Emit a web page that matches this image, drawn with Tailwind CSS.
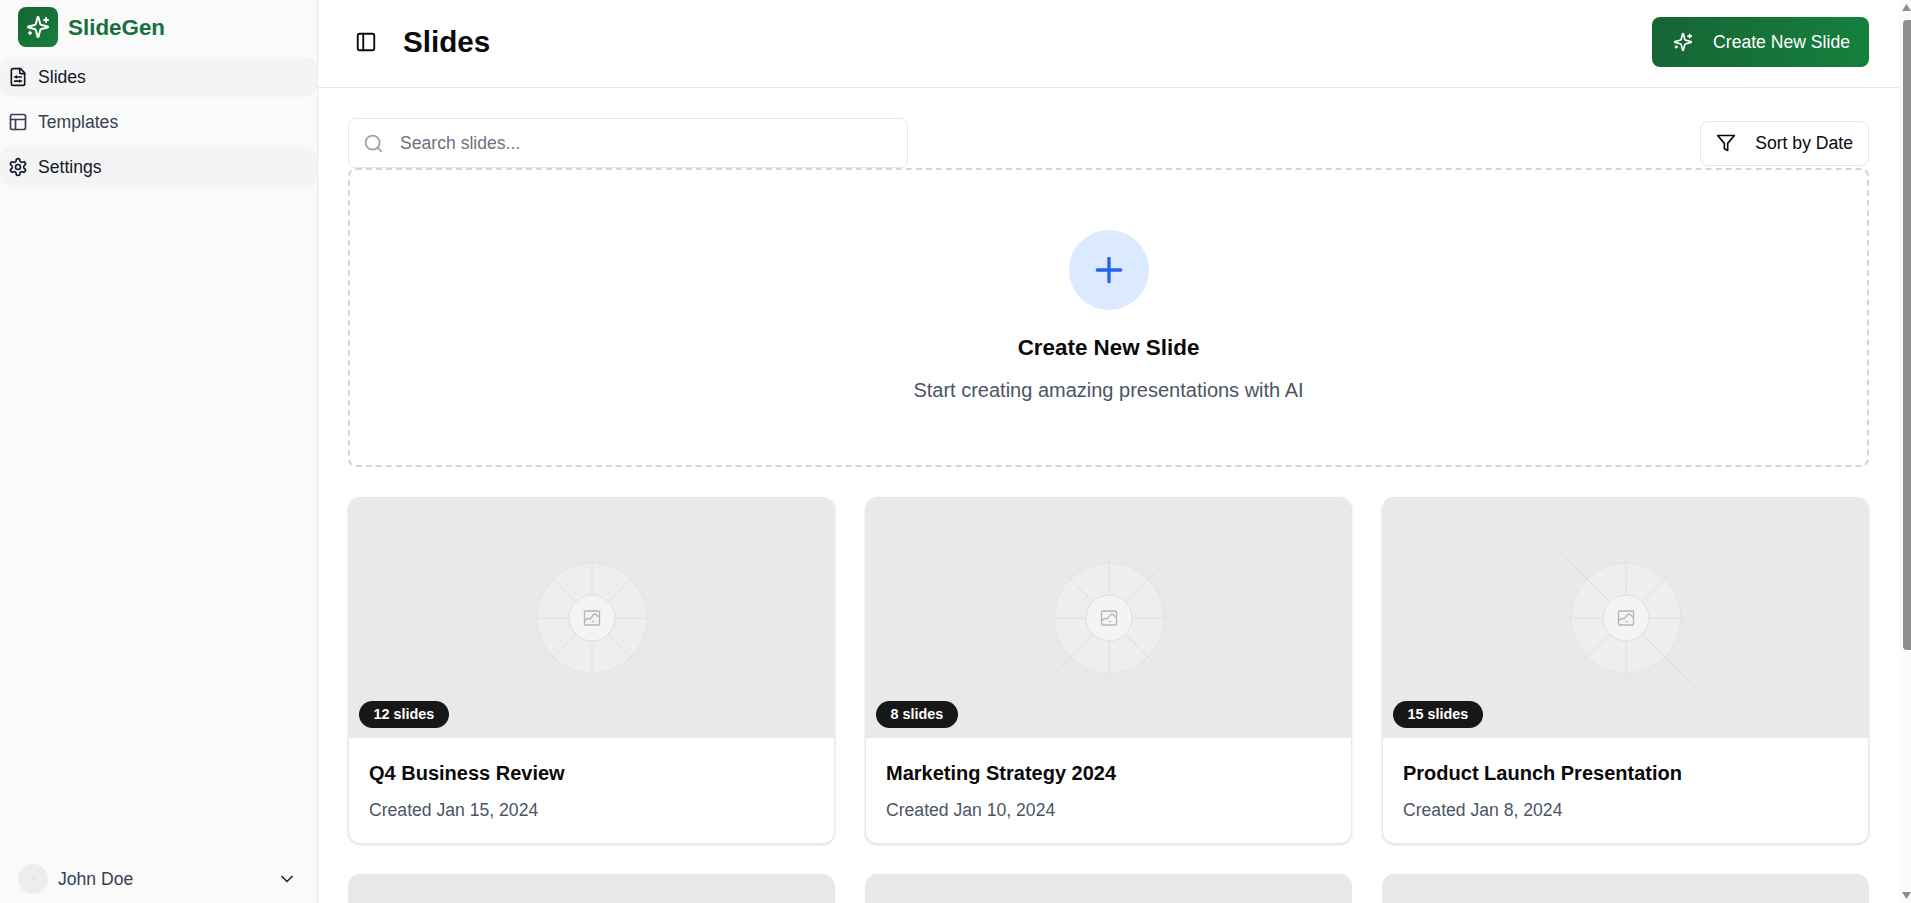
<!DOCTYPE html>
<html lang="en">
<head>
<meta charset="utf-8">
<title>SlideGen</title>
<script src="https://cdn.jsdelivr.net/npm/@tailwindcss/browser@4"></script>
</head>
<body class="h-[903px] overflow-hidden bg-white font-['Liberation_Sans',Arial,sans-serif] text-[17.6px] text-[#0a0a0a]">
<svg width="0" height="0" class="absolute">
  <defs>
    <radialGradient id="ray" gradientUnits="userSpaceOnUse" cx="80" cy="80" r="78">
      <stop offset="0.3" stop-color="#dedede"/>
      <stop offset="0.8" stop-color="#e2e2e2"/>
      <stop offset="1" stop-color="#e8e8e8"/>
    </radialGradient>
    <radialGradient id="diag" gradientUnits="userSpaceOnUse" cx="80" cy="80" r="108">
      <stop offset="0.3" stop-color="#dcdcdc"/>
      <stop offset="0.85" stop-color="#e0e0e0"/>
      <stop offset="1" stop-color="#e7e7e7"/>
    </radialGradient>
  </defs>
</svg>
<div class="flex h-[903px]">
  <aside class="flex w-[318px] shrink-0 flex-col border-r border-[#e5e7eb] bg-[#fafafa]">
    <div class="flex h-[57px] items-start gap-[10px] pl-[18px] pt-[7px]">
      <div class="flex h-10 w-10 items-center justify-center rounded-lg bg-gradient-to-br from-[#166534] to-[#15803d]">
        <svg class="h-6 w-6" viewBox="0 0 24 24" fill="none" stroke="#fff" stroke-width="2" stroke-linecap="round" stroke-linejoin="round"><path d="M9.937 15.5A2 2 0 0 0 8.5 14.063l-6.135-1.582a.5.5 0 0 1 0-.962L8.5 9.936A2 2 0 0 0 9.937 8.5l1.582-6.135a.5.5 0 0 1 .963 0L14.063 8.5A2 2 0 0 0 15.5 9.937l6.135 1.581a.5.5 0 0 1 0 .964L15.5 14.063a2 2 0 0 0-1.437 1.437l-1.582 6.135a.5.5 0 0 1-.963 0z"/><path d="M20 3v4"/><path d="M22 5h-4"/><path d="M4 17v2"/><path d="M5 18H3"/></svg>
      </div>
      <span class="mt-[9px] text-[22.4px] leading-6 font-bold text-[#15703d]">SlideGen</span>
    </div>
    <nav class="flex flex-col gap-[5px]">
      <a class="flex h-10 items-center gap-[10px] rounded-xl bg-[#f4f4f5] pl-[8px] text-[#111827]">
        <svg class="h-5 w-5" viewBox="0 0 24 24" fill="none" stroke="currentColor" stroke-width="2" stroke-linecap="round" stroke-linejoin="round"><path d="M15 2H6a2 2 0 0 0-2 2v16a2 2 0 0 0 2 2h12a2 2 0 0 0 2-2V7Z"/><path d="M14 2v4a2 2 0 0 0 2 2h4"/><path d="M8 12h8"/><path d="M10 11v2"/><path d="M8 17h8"/><path d="M14 16v2"/></svg>
        <span>Slides</span>
      </a>
      <a class="flex h-10 items-center gap-[10px] rounded-xl pl-[8px] text-[#374151]">
        <svg class="h-5 w-5" viewBox="0 0 24 24" fill="none" stroke="currentColor" stroke-width="2" stroke-linecap="round" stroke-linejoin="round"><rect width="18" height="18" x="3" y="3" rx="2"/><path d="M3 9h18"/><path d="M9 21V9"/></svg>
        <span>Templates</span>
      </a>
      <a class="flex h-10 items-center gap-[10px] rounded-xl bg-[#f4f4f5] pl-[8px] text-[#111827]">
        <svg class="h-5 w-5" viewBox="0 0 24 24" fill="none" stroke="currentColor" stroke-width="2" stroke-linecap="round" stroke-linejoin="round"><path d="M12.22 2h-.44a2 2 0 0 0-2 2v.18a2 2 0 0 1-1 1.73l-.43.25a2 2 0 0 1-2 0l-.15-.08a2 2 0 0 0-2.73.73l-.22.38a2 2 0 0 0 .73 2.73l.15.1a2 2 0 0 1 1 1.72v.51a2 2 0 0 1-1 1.74l-.15.09a2 2 0 0 0-.73 2.73l.22.38a2 2 0 0 0 2.73.73l.15-.08a2 2 0 0 1 2 0l.43.25a2 2 0 0 1 1 1.73V20a2 2 0 0 0 2 2h.44a2 2 0 0 0 2-2v-.18a2 2 0 0 1 1-1.73l.43-.25a2 2 0 0 1 2 0l.15.08a2 2 0 0 0 2.73-.73l.22-.39a2 2 0 0 0-.73-2.73l-.15-.08a2 2 0 0 1-1-1.74v-.5a2 2 0 0 1 1-1.74l.15-.09a2 2 0 0 0 .73-2.73l-.22-.38a2 2 0 0 0-2.73-.73l-.15.08a2 2 0 0 1-2 0l-.43-.25a2 2 0 0 1-1-1.73V4a2 2 0 0 0-2-2z"/><circle cx="12" cy="12" r="3"/></svg>
        <span>Settings</span>
      </a>
    </nav>
    <div class="mt-auto flex h-[39px] items-start justify-between pl-[18px] pr-5">
      <div class="flex items-center gap-[10px]">
        <div class="flex h-[30px] w-[30px] items-center justify-center rounded-full bg-[#ededed]"><span class="h-1 w-1 rounded-full bg-[#e5e5e5]"></span></div>
        <span class="text-[#374151]">John Doe</span>
      </div>
      <svg class="mt-[5px] h-5 w-5 text-[#1f2937]" viewBox="0 0 24 24" fill="none" stroke="currentColor" stroke-width="2" stroke-linecap="round" stroke-linejoin="round"><path d="m6 9 6 6 6-6"/></svg>
    </div>
  </aside>

  <main class="flex min-w-0 flex-1 flex-col overflow-hidden">
    <header class="flex h-[88px] shrink-0 items-start justify-between border-b border-[#e5e7eb] pl-[30px] pr-[30px] pt-[17px]">
      <div class="flex h-[50px] items-center gap-[19px]">
        <button class="flex h-9 w-9 items-center justify-center text-[#0a0a0a]">
          <svg class="h-[22px] w-[22px]" viewBox="0 0 24 24" fill="none" stroke="currentColor" stroke-width="2" stroke-linecap="round" stroke-linejoin="round"><rect width="18" height="18" x="3" y="3" rx="2"/><path d="M9 3v18"/></svg>
        </button>
        <h1 class="text-[29.6px] font-bold">Slides</h1>
      </div>
      <button class="flex h-[50px] items-center gap-5 rounded-lg bg-gradient-to-r from-[#166534] to-[#15803d] pl-[21px] pr-[19px] text-white">
        <svg class="h-5 w-5" viewBox="0 0 24 24" fill="none" stroke="currentColor" stroke-width="2" stroke-linecap="round" stroke-linejoin="round"><path d="M9.937 15.5A2 2 0 0 0 8.5 14.063l-6.135-1.582a.5.5 0 0 1 0-.962L8.5 9.936A2 2 0 0 0 9.937 8.5l1.582-6.135a.5.5 0 0 1 .963 0L14.063 8.5A2 2 0 0 0 15.5 9.937l6.135 1.581a.5.5 0 0 1 0 .964L15.5 14.063a2 2 0 0 0-1.437 1.437l-1.582 6.135a.5.5 0 0 1-.963 0z"/><path d="M20 3v4"/><path d="M22 5h-4"/><path d="M4 17v2"/><path d="M5 18H3"/></svg>
        <span>Create New Slide</span>
      </button>
    </header>

    <div class="flex flex-col px-[30px] pt-[30px]">
      <div class="flex h-[50px] items-center justify-between">
        <div class="flex h-[50px] w-[560px] items-center gap-[16px] rounded-lg border border-[#e5e7eb] bg-white pl-[14px]">
          <svg class="h-[21px] w-[21px] text-[#9ca3af]" viewBox="0 0 24 24" fill="none" stroke="currentColor" stroke-width="2" stroke-linecap="round" stroke-linejoin="round"><circle cx="11" cy="11" r="8"/><path d="m21 21-4.3-4.3"/></svg>
          <span class="text-[#6b7280]">Search slides...</span>
        </div>
        <button class="flex h-[45px] items-center gap-[19px] rounded-lg border border-[#e5e7eb] bg-white pl-[15px] pr-[15px]">
          <svg class="h-5 w-5" viewBox="0 0 24 24" fill="none" stroke="currentColor" stroke-width="2" stroke-linecap="round" stroke-linejoin="round"><polygon points="22 3 2 3 10 12.46 10 19 14 21 14 12.46 22 3"/></svg>
          <span>Sort by Date</span>
        </button>
      </div>

      <section class="flex h-[299px] flex-col items-center rounded-lg border-2 border-dashed border-[#d1d5db] pt-[60px]">
        <div class="flex h-20 w-20 items-center justify-center rounded-full bg-[#dbeafe]">
          <svg class="h-10 w-10 text-[#2563eb]" viewBox="0 0 24 24" fill="none" stroke="currentColor" stroke-width="2" stroke-linecap="round" stroke-linejoin="round"><path d="M5 12h14"/><path d="M12 5v14"/></svg>
        </div>
        <h2 class="mt-[21px] text-[22.4px] font-bold">Create New Slide</h2>
        <p class="mt-[10px] text-[20px] text-[#4b5563]">Start creating amazing presentations with AI</p>
      </section>

      <div class="mt-[30px] grid grid-cols-3 gap-[30px]">
        <article class="h-[347px] overflow-hidden rounded-xl border border-[#e5e7eb] bg-white shadow-sm">
          <div class="relative flex h-[240px] items-center justify-center bg-[#e9e9e9]">
            <svg class="h-40 w-40" viewBox="0 0 160 160" fill="none"><circle cx="80" cy="80" r="55" fill="#eeeeee" stroke="#e3e3e3"/><g stroke="url(#ray)"><path d="M80 3V157"/><path d="M3 80H157"/></g><g stroke="url(#diag)"><path d="M3 3L157 157"/><path d="M157 3L3 157"/></g><circle cx="80" cy="80" r="23" fill="#f4f4f4" stroke="#dedede"/><g stroke="#b4b4b4" stroke-width="1.3"><rect x="72.5" y="73" width="15" height="14" rx="1"/><path d="M73 83c1-2 3-3 5-2 2-1 3-5 5-5l4 3"/><path d="M80 83l2 1"/></g></svg>
            <span class="absolute bottom-[10px] left-[10px] flex h-[27px] items-center rounded-full bg-[#171717] px-[14.5px] text-[14.4px] font-bold text-white">12 slides</span>
          </div>
          <div class="px-[20px] pt-[20px]">
            <h3 class="text-[20px] font-bold">Q4 Business Review</h3>
            <p class="mt-[9px] text-[#4b5563]">Created Jan 15, 2024</p>
          </div>
        </article>
        <article class="h-[347px] overflow-hidden rounded-xl border border-[#e5e7eb] bg-white shadow-sm">
          <div class="relative flex h-[240px] items-center justify-center bg-[#e9e9e9]">
            <svg class="h-40 w-40" viewBox="0 0 160 160" fill="none"><circle cx="80" cy="80" r="55" fill="#eeeeee" stroke="#e3e3e3"/><g stroke="url(#ray)"><path d="M80 3V157"/><path d="M3 80H157"/></g><g stroke="url(#diag)"><path d="M3 3L157 157"/><path d="M157 3L3 157"/></g><circle cx="80" cy="80" r="23" fill="#f4f4f4" stroke="#dedede"/><g stroke="#b4b4b4" stroke-width="1.3"><rect x="72.5" y="73" width="15" height="14" rx="1"/><path d="M73 83c1-2 3-3 5-2 2-1 3-5 5-5l4 3"/><path d="M80 83l2 1"/></g></svg>
            <span class="absolute bottom-[10px] left-[10px] flex h-[27px] items-center rounded-full bg-[#171717] px-[14.5px] text-[14.4px] font-bold text-white">8 slides</span>
          </div>
          <div class="px-[20px] pt-[20px]">
            <h3 class="text-[20px] font-bold">Marketing Strategy 2024</h3>
            <p class="mt-[9px] text-[#4b5563]">Created Jan 10, 2024</p>
          </div>
        </article>
        <article class="h-[347px] overflow-hidden rounded-xl border border-[#e5e7eb] bg-white shadow-sm">
          <div class="relative flex h-[240px] items-center justify-center bg-[#e9e9e9]">
            <svg class="h-40 w-40" viewBox="0 0 160 160" fill="none"><circle cx="80" cy="80" r="55" fill="#eeeeee" stroke="#e3e3e3"/><g stroke="url(#ray)"><path d="M80 3V157"/><path d="M3 80H157"/></g><g stroke="url(#diag)"><path d="M3 3L157 157"/><path d="M157 3L3 157"/></g><circle cx="80" cy="80" r="23" fill="#f4f4f4" stroke="#dedede"/><g stroke="#b4b4b4" stroke-width="1.3"><rect x="72.5" y="73" width="15" height="14" rx="1"/><path d="M73 83c1-2 3-3 5-2 2-1 3-5 5-5l4 3"/><path d="M80 83l2 1"/></g></svg>
            <span class="absolute bottom-[10px] left-[10px] flex h-[27px] items-center rounded-full bg-[#171717] px-[14.5px] text-[14.4px] font-bold text-white">15 slides</span>
          </div>
          <div class="px-[20px] pt-[20px]">
            <h3 class="text-[20px] font-bold">Product Launch Presentation</h3>
            <p class="mt-[9px] text-[#4b5563]">Created Jan 8, 2024</p>
          </div>
        </article>
      </div>
      <div class="mt-[30px] grid grid-cols-3 gap-[30px]">
        <div class="h-[60px] rounded-t-xl border border-[#e5e7eb] bg-[#e9e9e9]"></div>
        <div class="h-[60px] rounded-t-xl border border-[#e5e7eb] bg-[#e9e9e9]"></div>
        <div class="h-[60px] rounded-t-xl border border-[#e5e7eb] bg-[#e9e9e9]"></div>
      </div>
    </div>
  </main>

  <div class="flex w-[12px] shrink-0 flex-col items-end bg-[#fbfbfb]">
    <svg class="mt-[3px] h-[9px] w-[9px] text-[#8f8f8f]" viewBox="0 0 9 9" fill="currentColor"><path d="M4.5 1L9 8H0z"/></svg>
    <div class="mt-[8px] h-[630px] w-[8px] rounded-l-[4px] bg-[#8f8f8f]"></div>
    <svg class="mt-auto mb-[3px] h-[9px] w-[9px] text-[#8f8f8f]" viewBox="0 0 9 9" fill="currentColor"><path d="M0 1H9L4.5 8z"/></svg>
  </div>
</div>
</body>
</html>
